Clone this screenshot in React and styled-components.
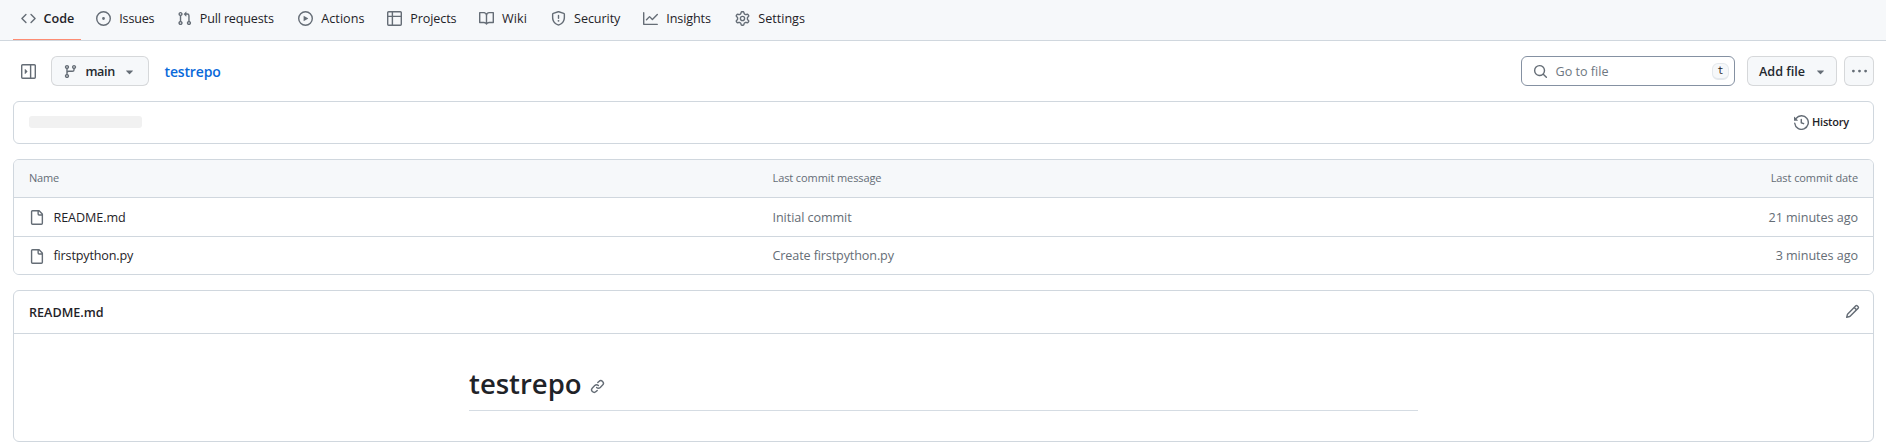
import React from 'react';
import styled, { createGlobalStyle } from 'styled-components';

const GlobalStyle = createGlobalStyle`
  *, *::before, *::after { box-sizing: border-box; }
  body {
    margin: 0;
    background: #fff;
    color: #1f2328;
    font-family: "Open Sans", "Noto Sans", sans-serif;
    font-size: 12.6px;
    line-height: 20px;
  }
`;

const ICONS = {
  code: 'm11.28 3.22 4.25 4.25a.75.75 0 0 1 0 1.06l-4.25 4.25a.749.749 0 0 1-1.275-.326.749.749 0 0 1 .215-.734L13.94 8l-3.72-3.72a.749.749 0 0 1 .326-1.275.749.749 0 0 1 .734.215Zm-6.56 0a.751.751 0 0 1 1.042.018.751.751 0 0 1 .018 1.042L2.06 8l3.72 3.72a.749.749 0 0 1-.326 1.275.749.749 0 0 1-.734-.215L.47 8.53a.75.75 0 0 1 0-1.06Z',
  issue: 'M8 9.5a1.5 1.5 0 1 0 0-3 1.5 1.5 0 0 0 0 3ZM8 0a8 8 0 1 1 0 16A8 8 0 0 1 8 0ZM1.5 8a6.5 6.5 0 1 0 13 0 6.5 6.5 0 0 0-13 0Z',
  pull: 'M1.5 3.25a2.25 2.25 0 1 1 3 2.122v5.256a2.251 2.251 0 1 1-1.5 0V5.372A2.25 2.25 0 0 1 1.5 3.25Zm5.677-.177L9.573.677A.25.25 0 0 1 10 .854V2.5h1A2.5 2.5 0 0 1 13.5 5v5.628a2.251 2.251 0 1 1-1.5 0V5a1 1 0 0 0-1-1h-1v1.646a.25.25 0 0 1-.427.177L7.177 3.427a.25.25 0 0 1 0-.354ZM3.75 2.5a.75.75 0 1 0 0 1.5.75.75 0 0 0 0-1.5Zm0 9.5a.75.75 0 1 0 0 1.5.75.75 0 0 0 0-1.5Zm8.25.75a.75.75 0 1 0 1.5 0 .75.75 0 0 0-1.5 0Z',
  play: 'M8 0a8 8 0 1 1 0 16A8 8 0 0 1 8 0ZM1.5 8a6.5 6.5 0 1 0 13 0 6.5 6.5 0 0 0-13 0Zm4.879-2.773 4.264 2.559a.25.25 0 0 1 0 .428l-4.264 2.559A.25.25 0 0 1 6 10.559V5.442a.25.25 0 0 1 .379-.215Z',
  table: 'M0 1.75C0 .784.784 0 1.75 0h12.5C15.216 0 16 .784 16 1.75v12.5A1.75 1.75 0 0 1 14.25 16H1.75A1.75 1.75 0 0 1 0 14.25ZM6.5 6.5v8h7.75a.25.25 0 0 0 .25-.25V6.5Zm8-1.5V1.75a.25.25 0 0 0-.25-.25H6.5V5Zm-13 1.5v7.75c0 .138.112.25.25.25H5v-8ZM5 5V1.5H1.75a.25.25 0 0 0-.25.25V5Z',
  book: 'M0 1.75A.75.75 0 0 1 .75 1h4.253c1.227 0 2.317.59 3 1.501A3.743 3.743 0 0 1 11.006 1h4.245a.75.75 0 0 1 .75.75v10.5a.75.75 0 0 1-.75.75h-4.507a2.25 2.25 0 0 0-1.591.659l-.622.621a.75.75 0 0 1-1.06 0l-.622-.621A2.25 2.25 0 0 0 5.258 13H.75a.75.75 0 0 1-.75-.75Zm7.251 10.324.004-5.073-.002-2.253A2.25 2.25 0 0 0 5.003 2.5H1.5v9h3.757a3.75 3.75 0 0 1 1.994.574ZM8.755 4.75l-.004 7.322a3.752 3.752 0 0 1 1.992-.572H14.5v-9h-3.495a2.25 2.25 0 0 0-2.25 2.25Z',
  shield: 'M7.467.133a1.748 1.748 0 0 1 1.066 0l5.25 1.68A1.75 1.75 0 0 1 15 3.48V7c0 1.566-.32 3.182-1.303 4.682-.983 1.498-2.585 2.813-5.032 3.855a1.697 1.697 0 0 1-1.33 0c-2.447-1.042-4.049-2.357-5.032-3.855C1.32 10.182 1 8.566 1 7V3.48a1.75 1.75 0 0 1 1.217-1.667Zm.61 1.429a.25.25 0 0 0-.153 0l-5.25 1.68a.25.25 0 0 0-.174.238V7c0 1.358.275 2.666 1.057 3.86.784 1.194 2.121 2.34 4.366 3.297a.196.196 0 0 0 .154 0c2.245-.956 3.582-2.104 4.366-3.298C13.225 9.666 13.5 8.36 13.5 7V3.48a.251.251 0 0 0-.174-.237l-5.25-1.68ZM8.75 4.75v3a.75.75 0 0 1-1.5 0v-3a.75.75 0 0 1 1.5 0ZM9 10.5a1 1 0 1 1-2 0 1 1 0 0 1 2 0Z',
  graph: 'M1.5 1.75V13.5h13.75a.75.75 0 0 1 0 1.5H.75a.75.75 0 0 1-.75-.75V1.75a.75.75 0 0 1 1.5 0Zm14.28 2.53-5.25 5.25a.75.75 0 0 1-1.06 0L7 7.06 4.28 9.78a.751.751 0 0 1-1.042-.018.751.751 0 0 1-.018-1.042l3.25-3.25a.75.75 0 0 1 1.06 0L10 7.94l4.72-4.72a.751.751 0 0 1 1.042.018.751.751 0 0 1 .018 1.042Z',
  gear: 'M8 0a8.2 8.2 0 0 1 .701.031C9.444.095 9.99.645 10.16 1.29l.288 1.107c.018.066.079.158.212.224.231.114.454.243.668.386.123.082.233.09.299.071l1.103-.303c.644-.176 1.392.021 1.82.63.27.385.506.792.704 1.218.315.675.111 1.422-.364 1.891l-.814.806c-.049.048-.098.147-.088.294.016.257.016.515 0 .772-.01.147.038.246.088.294l.814.806c.475.469.679 1.216.364 1.891a7.977 7.977 0 0 1-.704 1.217c-.428.61-1.176.807-1.82.63l-1.102-.302c-.067-.019-.177-.011-.3.071a5.909 5.909 0 0 1-.668.386c-.133.066-.194.158-.211.224l-.29 1.106c-.168.646-.715 1.196-1.458 1.26a8.006 8.006 0 0 1-1.402 0c-.743-.064-1.289-.614-1.458-1.26l-.289-1.106c-.018-.066-.079-.158-.212-.224a5.738 5.738 0 0 1-.668-.386c-.123-.082-.233-.09-.299-.071l-1.103.303c-.644.176-1.392-.021-1.82-.63a8.12 8.12 0 0 1-.704-1.218c-.315-.675-.111-1.422.363-1.891l.815-.806c.05-.048.098-.147.088-.294a6.214 6.214 0 0 1 0-.772c.01-.147-.038-.246-.088-.294l-.815-.806C.635 6.045.431 5.298.746 4.623a7.92 7.92 0 0 1 .704-1.217c.428-.61 1.176-.807 1.82-.63l1.102.302c.067.019.177.011.3-.071.214-.143.437-.272.668-.386.133-.066.194-.158.211-.224l.29-1.106C6.009.645 6.556.095 7.299.03 7.53.01 7.764 0 8 0Zm-.571 1.525c-.036.003-.108.036-.137.146l-.289 1.105c-.147.561-.549.967-.998 1.189-.173.086-.34.183-.5.29-.417.278-.97.423-1.529.27l-1.103-.303c-.109-.03-.175.016-.195.045-.22.312-.412.644-.573.99-.014.031-.021.11.059.19l.815.806c.411.406.562.957.53 1.456a4.709 4.709 0 0 0 0 .582c.032.499-.119 1.05-.53 1.456l-.815.806c-.081.08-.073.159-.059.19.162.346.353.677.573.989.02.03.085.076.195.046l1.102-.303c.56-.153 1.113-.008 1.53.27.161.107.328.204.501.29.447.222.85.629.997 1.189l.289 1.105c.029.109.101.143.137.146a6.6 6.6 0 0 0 1.142 0c.036-.003.108-.036.137-.146l.289-1.105c.147-.561.549-.967.998-1.189.173-.086.34-.183.5-.29.417-.278.97-.423 1.529-.27l1.103.303c.109.029.175-.016.195-.045.22-.313.411-.644.573-.99.014-.031.021-.11-.059-.19l-.815-.806c-.411-.406-.562-.957-.53-1.456a4.709 4.709 0 0 0 0-.582c-.032-.499.119-1.05.53-1.456l.815-.806c.081-.08.073-.159.059-.19a6.464 6.464 0 0 0-.573-.989c-.02-.03-.085-.076-.195-.046l-1.102.303c-.56.153-1.113.008-1.53-.27a4.44 4.44 0 0 0-.501-.29c-.447-.222-.85-.629-.997-1.189l-.289-1.105c-.029-.11-.101-.143-.137-.146a6.6 6.6 0 0 0-1.142 0ZM11 8a3 3 0 1 1-6 0 3 3 0 0 1 6 0ZM9.5 8a1.5 1.5 0 1 0-3.001.001A1.5 1.5 0 0 0 9.5 8Z',
  sidebar: 'M6.823 7.823a.25.25 0 0 1 0 .354l-2.396 2.396A.25.25 0 0 1 4 10.396V5.604a.25.25 0 0 1 .427-.177ZM1.75 0h12.5C15.216 0 16 .784 16 1.75v12.5A1.75 1.75 0 0 1 14.25 16H1.75A1.75 1.75 0 0 1 0 14.25V1.75C0 .784.784 0 1.75 0ZM1.5 1.75v12.5c0 .138.112.25.25.25H9.5v-13H1.75a.25.25 0 0 0-.25.25ZM11 14.5h3.25a.25.25 0 0 0 .25-.25V1.75a.25.25 0 0 0-.25-.25H11Z',
  branch: 'M9.5 3.25a2.25 2.25 0 1 1 3 2.122V6A2.5 2.5 0 0 1 10 8.5H6a1 1 0 0 0-1 1v1.128a2.251 2.251 0 1 1-1.5 0V5.372a2.25 2.25 0 1 1 1.5 0v1.836A2.493 2.493 0 0 1 6 7h4a1 1 0 0 0 1-1v-.628A2.25 2.25 0 0 1 9.5 3.25Zm-6 0a.75.75 0 1 0 1.5 0 .75.75 0 0 0-1.5 0Zm8.25-.75a.75.75 0 1 0 0 1.5.75.75 0 0 0 0-1.5ZM4.25 12a.75.75 0 1 0 0 1.5.75.75 0 0 0 0-1.5Z',
  triangle: 'm4.427 7.427 3.396 3.396a.25.25 0 0 0 .354 0l3.396-3.396A.25.25 0 0 0 11.396 7H4.604a.25.25 0 0 0-.177.427Z',
  search: 'M10.68 11.74a6 6 0 0 1-7.922-8.982 6 6 0 0 1 8.982 7.922l3.04 3.04a.749.749 0 0 1-.326 1.275.749.749 0 0 1-.734-.215ZM11.5 7a4.499 4.499 0 1 0-8.997 0A4.499 4.499 0 0 0 11.5 7Z',
  kebab: 'M8 9a1.5 1.5 0 1 0 0-3 1.5 1.5 0 0 0 0 3ZM1.5 9a1.5 1.5 0 1 0 0-3 1.5 1.5 0 0 0 0 3Zm13 0a1.5 1.5 0 1 0 0-3 1.5 1.5 0 0 0 0 3Z',
  history: 'm.427 1.927 1.215 1.215a8.002 8.002 0 1 1-1.6 5.685.75.75 0 1 1 1.493-.154 6.5 6.5 0 1 0 1.18-4.458l1.358 1.358A.25.25 0 0 1 3.896 6H.25A.25.25 0 0 1 0 5.75V2.104a.25.25 0 0 1 .427-.177ZM7.75 4a.75.75 0 0 1 .75.75v2.992l2.028.812a.75.75 0 0 1-.557 1.392l-2.5-1A.751.751 0 0 1 7 8.25v-3.5A.75.75 0 0 1 7.75 4Z',
  file: 'M2 1.75C2 .784 2.784 0 3.75 0h6.586c.464 0 .909.184 1.237.513l2.914 2.914c.329.328.513.773.513 1.237v9.586A1.75 1.75 0 0 1 13.25 16h-9.5A1.75 1.75 0 0 1 2 14.25Zm1.75-.25a.25.25 0 0 0-.25.25v12.5c0 .138.112.25.25.25h9.5a.25.25 0 0 0 .25-.25V6h-2.75A1.75 1.75 0 0 1 9 4.25V1.5Zm6.75.062V4.25c0 .138.112.25.25.25h2.688l-.011-.013-2.914-2.914-.013-.011Z',
  pencil: 'M11.013 1.427a1.75 1.75 0 0 1 2.474 0l1.086 1.086a1.75 1.75 0 0 1 0 2.474l-8.61 8.61c-.21.21-.47.364-.756.445l-3.251.93a.75.75 0 0 1-.927-.928l.929-3.25c.081-.286.235-.547.445-.758l8.61-8.61Zm.176 4.823L9.75 4.81l-6.286 6.287a.253.253 0 0 0-.064.108l-.558 1.953 1.953-.558a.253.253 0 0 0 .108-.064Zm1.238-3.763a.25.25 0 0 0-.354 0L10.811 3.75l1.439 1.44 1.263-1.263a.25.25 0 0 0 0-.354Z',
  link: 'm7.775 3.275 1.25-1.25a3.5 3.5 0 1 1 4.95 4.95l-2.5 2.5a3.5 3.5 0 0 1-4.95 0 .751.751 0 0 1 .018-1.042.751.751 0 0 1 1.042-.018 1.998 1.998 0 0 0 2.83 0l2.5-2.5a2.002 2.002 0 0 0-2.83-2.83l-1.25 1.25a.751.751 0 0 1-1.042-.018.751.751 0 0 1-.018-1.042Zm-4.69 9.64a1.998 1.998 0 0 0 2.83 0l1.25-1.25a.751.751 0 0 1 1.042.018.751.751 0 0 1 .018 1.042l-1.25 1.25a3.5 3.5 0 1 1-4.95-4.95l2.5-2.5a3.5 3.5 0 0 1 4.95 0 .751.751 0 0 1-.018 1.042.751.751 0 0 1-1.042.018 1.998 1.998 0 0 0-2.83 0l-2.5 2.5a1.998 1.998 0 0 0 0 2.83Z',
};

const Svg = styled.svg`
  display: block;
  flex: none;
  width: 15px;
  height: 15px;
  fill: #656d76;
`;
const Icon = ({ name }) => (
  <Svg viewBox="0 0 16 16" aria-hidden="true"><path d={ICONS[name]} /></Svg>
);

const Text = styled.span`
  white-space: nowrap;
  letter-spacing: ${(p) => p.$track || 0}px;
`;

const Nav = styled.nav`
  display: flex;
  gap: 7.5px;
  height: 41px;
  padding-left: 13px;
  background: #f6f8fa;
  border-bottom: 1px solid #d0d7de;
`;
const Tab = styled.a`
  display: flex;
  align-items: center;
  gap: ${(p) => (p.$active ? 7.5 : 8.3)}px;
  width: ${(p) => p.$width}px;
  height: 40px;
  padding: 0 0 2px 8px;
  border-bottom: 1px solid ${(p) => (p.$active ? '#fd8c73' : 'transparent')};
  font-weight: ${(p) => (p.$active ? 600 : 400)};
`;

const Main = styled.main`
  padding: 15px 12px 0 13px;
`;
const Toolbar = styled.div`
  display: flex;
  align-items: center;
  height: 30px;
  margin-bottom: 15px;
  padding-left: 8px;
`;
const Button = styled.button`
  display: flex;
  align-items: center;
  width: ${(p) => p.$width}px;
  height: 30px;
  margin: 0 0 0 ${(p) => p.$gap}px;
  padding: 0 0 0 ${(p) => p.$inset}px;
  border: 1px solid rgba(31, 35, 40, 0.15);
  border-radius: 6px;
  background: #f6f8fa;
  color: #24292f;
  font: inherit;
  font-weight: 600;
`;
const ButtonLabel = styled(Text)`
  width: ${(p) => p.$width}px;
  margin-left: ${(p) => p.$before || 0}px;
  padding-top: 1px;
  text-align: left;
`;
const RepoLink = styled.a`
  margin-left: 15.5px;
  padding-top: 2px;
  color: #0969da;
  font-size: 14px;
  font-weight: 600;
  letter-spacing: -0.15px;
`;
const Spacer = styled.div`
  flex: 1;
`;
const SearchBox = styled.div`
  display: flex;
  align-items: center;
  gap: 7.5px;
  width: 214px;
  height: 30px;
  padding: 0 5px 0 11px;
  border: 1px solid #8591a2;
  border-radius: 6px;
  color: #6e7781;
`;
const Placeholder = styled(Text)`
  padding-top: 1px;
`;
const Kbd = styled.kbd`
  width: 17px;
  height: 17px;
  margin-left: auto;
  border: 1px solid #e4e8ec;
  border-bottom-width: 2px;
  border-radius: 6px;
  background: #f6f8fa;
  color: #1f2328;
  font: 10px/13px "DejaVu Sans Mono", monospace;
  text-align: center;
`;

const Card = styled.section`
  margin-bottom: 15px;
  border: 1px solid #d0d7de;
  border-radius: 6px;
  overflow: hidden;
`;
const CommitBar = styled.div`
  display: flex;
  align-items: center;
  justify-content: space-between;
  height: 41px;
  padding: 0 24px 1px 15px;
`;
const Skeleton = styled.div`
  width: 112.5px;
  height: 12px;
  border-radius: 3px;
  background: #f1f1f1;
`;
const History = styled.a`
  display: flex;
  align-items: center;
  gap: 3.5px;
  font-size: 11px;
  font-weight: 600;
`;

const Row = styled.div`
  display: grid;
  grid-template-columns: 743.5px 1fr auto;
  align-items: center;
  height: ${(p) => p.$height}px;
  padding: ${(p) => (p.$head ? '0 15px 2px' : '1px 15px 0')};
  color: #656d76;
  border-top: ${(p) => (p.$head ? 0 : 1)}px solid #d0d7de;
  background: ${(p) => (p.$head ? '#f6f8fa' : '#fff')};
  font-size: ${(p) => (p.$head ? 11 : 12.6)}px;
  font-weight: ${(p) => (p.$head ? 500 : 400)};
`;
const FileName = styled.a`
  display: flex;
  align-items: center;
  gap: 9.5px;
  color: #1f2328;
`;

const ReadmeHead = styled.div`
  display: flex;
  align-items: center;
  justify-content: space-between;
  height: 43px;
  padding: 0 13px 0 15px;
  border-bottom: 1px solid #d0d7de;
  font-weight: 600;

  ${Svg} { margin-bottom: 2px; }
`;
const FileTitle = styled(Text)`
  padding-top: 2px;
`;
const ReadmeBody = styled.div`
  height: 107px;
  padding-top: 32px;
`;
const Title = styled.h1`
  display: flex;
  align-items: center;
  gap: 8px;
  width: 949px;
  height: 45px;
  margin: 0 auto;
  padding-bottom: 9px;
  border-bottom: 1px solid #d5dce3;
  font-size: 27.5px;
  font-weight: 600;
  line-height: 35px;
`;
const Anchor = styled.a`
  padding-top: 6px;
`;

const TABS = [
  ['code', 'Code', 67.5, 0],
  ['issue', 'Issues', 73, -0.2],
  ['pull', 'Pull requests', 114, -0.17],
  ['play', 'Actions', 81.5, 0.04],
  ['table', 'Projects', 84.2, -0.12],
  ['book', 'Wiki', 64.6, 0.1],
  ['shield', 'Security', 84.7, -0.08],
  ['graph', 'Insights', 84.5, -0.12],
  ['gear', 'Settings', 75, 0],
];

const FILES = [
  { name: 'README.md', nameTrack: -0.08, message: 'Initial commit', messageTrack: -0.07, date: '21 minutes ago', dateTrack: -0.05, height: 39 },
  { name: 'firstpython.py', nameTrack: -0.16, message: 'Create firstpython.py', messageTrack: -0.12, date: '3 minutes ago', dateTrack: -0.05, height: 38 },
];

export default function App() {
  return (
    <>
      <GlobalStyle />
      <Nav>
        {TABS.map(([icon, label, width, track], i) => (
          <Tab key={label} $width={width} $active={i === 0}>
            <Icon name={icon} />
            <Text $track={track}>{label}</Text>
          </Tab>
        ))}
      </Nav>
      <Main>
        <Toolbar>
          <Icon name="sidebar" />
          <Button $width={98} $gap={15} $inset={11}>
            <Icon name="branch" />
            <ButtonLabel $width={36.5} $before={7.5} $track={-0.4}>main</ButtonLabel>
            <Icon name="triangle" />
          </Button>
          <RepoLink>testrepo</RepoLink>
          <Spacer />
          <SearchBox>
            <Icon name="search" />
            <Placeholder>Go to file</Placeholder>
            <Kbd>t</Kbd>
          </SearchBox>
          <Button $width={90} $gap={12} $inset={11}>
            <ButtonLabel $width={54}>Add file</ButtonLabel>
            <Icon name="triangle" />
          </Button>
          <Button $width={30} $gap={7} $inset={7}>
            <Icon name="kebab" />
          </Button>
        </Toolbar>
        <Card>
          <CommitBar>
            <Skeleton />
            <History>
              <Icon name="history" />
              <Text $track={-0.2}>History</Text>
            </History>
          </CommitBar>
        </Card>
        <Card>
          <Row $head $height={37}>
            <Text $track={-0.2}>Name</Text>
            <Text $track={-0.1}>Last commit message</Text>
            <Text $track={-0.08}>Last commit date</Text>
          </Row>
          {FILES.map((f) => (
            <Row key={f.name} $height={f.height}>
              <FileName>
                <Icon name="file" />
                <Text $track={f.nameTrack}>{f.name}</Text>
              </FileName>
              <Text $track={f.messageTrack}>{f.message}</Text>
              <Text $track={f.dateTrack}>{f.date}</Text>
            </Row>
          ))}
        </Card>
        <Card>
          <ReadmeHead>
            <FileTitle $track={0}>README.md</FileTitle>
            <Icon name="pencil" />
          </ReadmeHead>
          <ReadmeBody>
            <Title>
              <Text>testrepo</Text>
              <Anchor><Icon name="link" /></Anchor>
            </Title>
          </ReadmeBody>
        </Card>
      </Main>
    </>
  );
}
